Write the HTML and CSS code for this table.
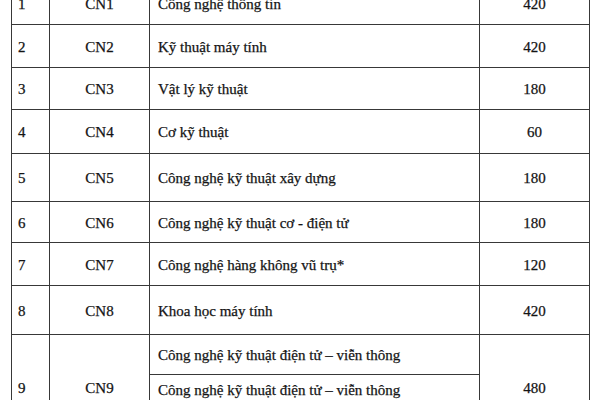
FILE: index.html
```html
<!DOCTYPE html>
<html lang="vi">
<head>
<meta charset="utf-8">
<link rel="stylesheet" href="styles.css">
</head>
<body>
<table class="majors">
  <colgroup>
    <col class="c-no">
    <col class="c-code">
    <col class="c-name">
    <col class="c-quota">
  </colgroup>
  <tbody>
    <tr class="r1"><td class="no">1</td><td class="code">CN1</td><td class="name">Công nghệ thông tin</td><td class="quota">420</td></tr>
    <tr class="r2"><td class="no">2</td><td class="code">CN2</td><td class="name">Kỹ thuật máy tính</td><td class="quota">420</td></tr>
    <tr class="r3"><td class="no">3</td><td class="code">CN3</td><td class="name">Vật lý kỹ thuật</td><td class="quota">180</td></tr>
    <tr class="r4"><td class="no">4</td><td class="code">CN4</td><td class="name">Cơ kỹ thuật</td><td class="quota">60</td></tr>
    <tr class="r5"><td class="no">5</td><td class="code">CN5</td><td class="name">Công nghệ kỹ thuật xây dựng</td><td class="quota">180</td></tr>
    <tr class="r6"><td class="no">6</td><td class="code">CN6</td><td class="name">Công nghệ kỹ thuật cơ - điện tử</td><td class="quota">180</td></tr>
    <tr class="r7"><td class="no">7</td><td class="code">CN7</td><td class="name">Công nghệ hàng không vũ trụ*</td><td class="quota">120</td></tr>
    <tr class="r8"><td class="no">8</td><td class="code">CN8</td><td class="name">Khoa học máy tính</td><td class="quota">420</td></tr>
    <tr class="r9a"><td class="no" rowspan="3">9</td><td class="code" rowspan="3">CN9</td><td class="name">Công nghệ kỹ thuật điện tử – viễn thông</td><td class="quota" rowspan="3">480</td></tr>
    <tr class="r9b"><td class="name">Công nghệ kỹ thuật điện tử – viễn thông</td></tr>
    <tr class="r9c"><td class="name">Kỹ thuật Robot</td></tr>
  </tbody>
</table>
</body>
</html>
```
FILE: styles.css
```css
html, body {
  margin: 0;
  padding: 0;
  background: #ffffff;
}

.majors {
  border-collapse: collapse;
  table-layout: fixed;
  width: 579px;
  margin: -19px 0 0 11px;
  font-family: "Liberation Serif", "Times New Roman", serif;
  font-size: 15px;
  color: #141414;
  -webkit-text-stroke: 0.25px #141414;
}

.c-no { width: 38px; }
.c-code { width: 100px; }
.c-name { width: 330px; }
.c-quota { width: 110px; }

.majors td {
  border: 1px solid #383838;
  vertical-align: middle;
  padding: 2px 0 0 0;
  white-space: nowrap;
}

.no { padding-left: 6px !important; text-align: left; }
.code { text-align: center; }
.name { padding-left: 8px !important; text-align: left; }
.quota { text-align: center; }

.r1 { height: 43px; }
.r2 { height: 43px; }
.r3 { height: 42px; }
.r4 { height: 44px; }
.r5 { height: 48px; }
.r6 { height: 41px; }
.r7 { height: 43px; }
.r8 { height: 49px; }
.r9a { height: 40px; }
.r9b { height: 30px; }
.r9c { height: 36px; }
```
